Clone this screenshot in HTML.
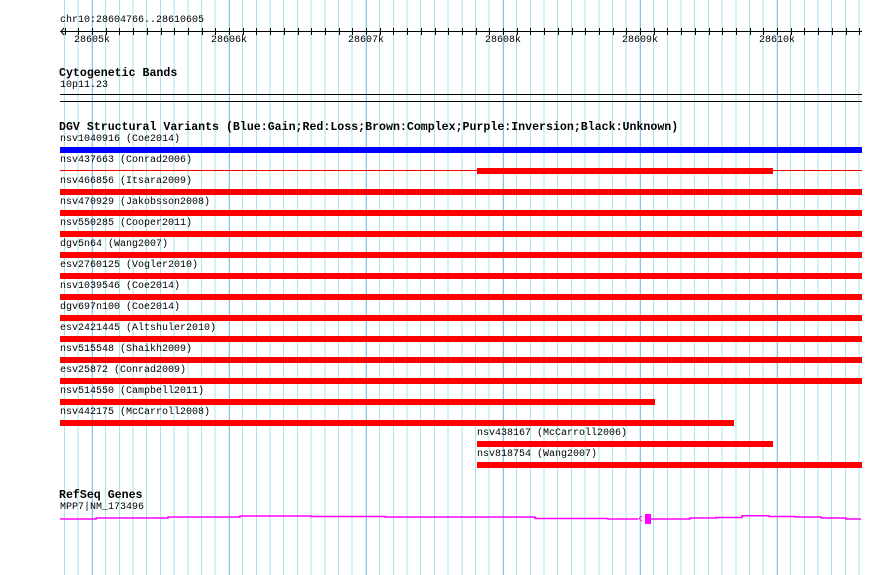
<!DOCTYPE html>
<html><head><style>
body{margin:0;width:890px;height:575px;background:#fff;position:relative;overflow:hidden;font-family:"Liberation Mono",monospace;}
.g{position:absolute;top:0;height:575px;}
.t{position:absolute;font-size:10px;line-height:10px;color:#000;white-space:pre;}
.b{position:absolute;font-size:11.6px;line-height:12px;font-weight:bold;white-space:pre;}
.bar{position:absolute;height:6px;background:#f00;}
</style></head><body>
<div class="g" style="left:64px;width:799px;background:repeating-linear-gradient(90deg,#a9e6ec 0 1px,transparent 1px 13.7px);"></div>
<div class="g" style="left:92px;width:700px;background:repeating-linear-gradient(90deg,#8fc3e6 0 1px,transparent 1px 137px);"></div>

<div class="t" style="left:60px;top:16px">chr10:28604766..28610605</div>
<svg style="position:absolute;left:0;top:0" width="890" height="575">
<line x1="60" y1="31.5" x2="862" y2="31.5" stroke="#000"/>
<polyline points="64,28 61,31.5 64,35" fill="none" stroke="#000"/>
<g stroke="#000" id="tk"></g>
<line x1="60" y1="94.5" x2="862" y2="94.5" stroke="#000"/>
<line x1="60" y1="101.5" x2="862" y2="101.5" stroke="#000"/>
<line x1="60" y1="170.5" x2="862" y2="170.5" stroke="#f00"/>
<polyline fill="none" stroke="#f0f" stroke-width="1.5" points="60,519 96,519 96,518 168,518 168,517 240,517 240,516 311,516 311,516.5 385,516.5 385,517 462,517 535,517 535,518.5 608,518.5 608,519 638,519 M"/>
<polyline fill="none" stroke="#f0f" stroke-width="1.5" points="664,519 690,519 690,518 716,518 716,517.5 742,517.5 742,515.7 769,515.7 769,516.5 795,516.5 795,517 821,517 821,518 846,518 846,519 861,519"/>
<polyline fill="none" stroke="#f0f" stroke-width="1" points="642,516 639,518.5 642,521"/>
<rect x="645" y="514" width="6" height="10" fill="#f0f"/>
<line x1="651" y1="519" x2="664" y2="519" stroke="#f0f" stroke-width="1.5"/>
</svg>
<script>
var g=document.getElementById('tk'),s='';
for(var i=0;i<59;i++){var x=64.6+i*13.7;x=Math.round(x)+0.5;s+='<line x1="'+x+'" y1="28" x2="'+x+'" y2="35"/>';}
g.innerHTML=s;
</script>
<div class="t" style="left:74px;top:36px">28605k</div>
<div class="t" style="left:211px;top:36px">28606k</div>
<div class="t" style="left:348px;top:36px">28607k</div>
<div class="t" style="left:485px;top:36px">28608k</div>
<div class="t" style="left:622px;top:36px">28609k</div>
<div class="t" style="left:759px;top:36px">28610k</div>

<div class="b" style="left:59px;top:68px">Cytogenetic Bands</div>
<div class="t" style="left:60px;top:81px">10p11.23</div>

<div class="b" style="left:59px;top:122px">DGV Structural Variants (Blue:Gain;Red:Loss;Brown:Complex;Purple:Inversion;Black:Unknown)</div>
<div class="t" style="left:60px;top:135px">nsv1040916 (Coe2014)</div>
<div class="bar" style="left:60px;top:147px;width:802px;background:#00f"></div>
<div class="t" style="left:60px;top:156px">nsv437663 (Conrad2006)</div>
<div class="bar" style="left:477px;top:168px;width:296px"></div>
<div class="t" style="left:60px;top:177px">nsv466856 (Itsara2009)</div>
<div class="bar" style="left:60px;top:189px;width:802px"></div>
<div class="t" style="left:60px;top:198px">nsv470929 (Jakobsson2008)</div>
<div class="bar" style="left:60px;top:210px;width:802px"></div>
<div class="t" style="left:60px;top:219px">nsv550285 (Cooper2011)</div>
<div class="bar" style="left:60px;top:231px;width:802px"></div>
<div class="t" style="left:60px;top:240px">dgv5n64 (Wang2007)</div>
<div class="bar" style="left:60px;top:252px;width:802px"></div>
<div class="t" style="left:60px;top:261px">esv2760125 (Vogler2010)</div>
<div class="bar" style="left:60px;top:273px;width:802px"></div>
<div class="t" style="left:60px;top:282px">nsv1039546 (Coe2014)</div>
<div class="bar" style="left:60px;top:294px;width:802px"></div>
<div class="t" style="left:60px;top:303px">dgv697n100 (Coe2014)</div>
<div class="bar" style="left:60px;top:315px;width:802px"></div>
<div class="t" style="left:60px;top:324px">esv2421445 (Altshuler2010)</div>
<div class="bar" style="left:60px;top:336px;width:802px"></div>
<div class="t" style="left:60px;top:345px">nsv515548 (Shaikh2009)</div>
<div class="bar" style="left:60px;top:357px;width:802px"></div>
<div class="t" style="left:60px;top:366px">esv25872 (Conrad2009)</div>
<div class="bar" style="left:60px;top:378px;width:802px"></div>
<div class="t" style="left:60px;top:387px">nsv514550 (Campbell2011)</div>
<div class="bar" style="left:60px;top:399px;width:595px"></div>
<div class="t" style="left:60px;top:408px">nsv442175 (McCarroll2008)</div>
<div class="bar" style="left:60px;top:420px;width:674px"></div>
<div class="t" style="left:477px;top:429px">nsv438167 (McCarroll2006)</div>
<div class="bar" style="left:477px;top:441px;width:296px"></div>
<div class="t" style="left:477px;top:450px">nsv818754 (Wang2007)</div>
<div class="bar" style="left:477px;top:462px;width:385px"></div>

<div class="b" style="left:59px;top:490px">RefSeq Genes</div>
<div class="t" style="left:60px;top:503px">MPP7|NM_173496</div>
</body></html>
